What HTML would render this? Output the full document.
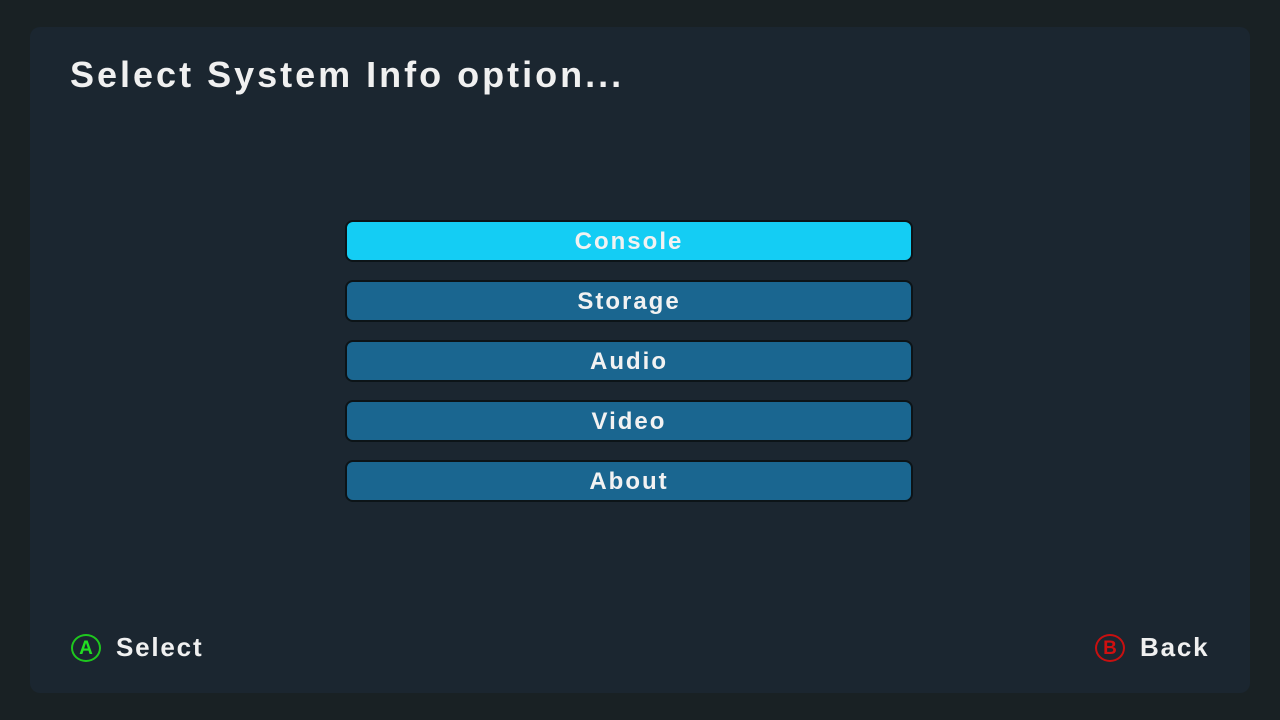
<!DOCTYPE html>
<html><head><style>
body{margin:0;width:1280px;height:720px;background:#192124;font-family:"Liberation Sans",sans-serif;overflow:hidden;position:relative}
.panel{position:absolute;left:30px;top:27px;width:1220px;height:666px;background:#1b2630;border-radius:10px}
.title{position:absolute;left:70px;top:54px;font-size:36px;font-weight:bold;color:#f0f0f0;letter-spacing:3px}
.btn{position:absolute;left:345px;width:564px;height:38px;background:#1a6690;border:2px solid #0c1418;border-radius:8px;color:#f2f2f2;font-weight:bold;font-size:24px;text-align:center;line-height:40px;letter-spacing:2px}
.sel{background:#14cdf4}
.hint{position:absolute;top:632px;font-size:26px;font-weight:bold;color:#f0f0f0;letter-spacing:1.8px}
.circ{position:absolute;top:634px;width:30px;height:28px;border-radius:50%;box-sizing:border-box;text-align:center;font-weight:bold;font-size:19px;line-height:25px}
</style></head><body>
<div class="panel"></div>
<div class="title">Select System Info option...</div>
<div class="btn sel" style="top:220px">Console</div>
<div class="btn" style="top:280px">Storage</div>
<div class="btn" style="top:340px">Audio</div>
<div class="btn" style="top:400px">Video</div>
<div class="btn" style="top:460px">About</div>
<div class="circ" style="left:71px;border:2px solid #1ec81e;color:#22e022">A</div>
<div class="hint" style="left:116px">Select</div>
<div class="circ" style="left:1095px;border:2px solid #c81010;color:#d01010">B</div>
<div class="hint" style="left:1140px">Back</div>
</body></html>
